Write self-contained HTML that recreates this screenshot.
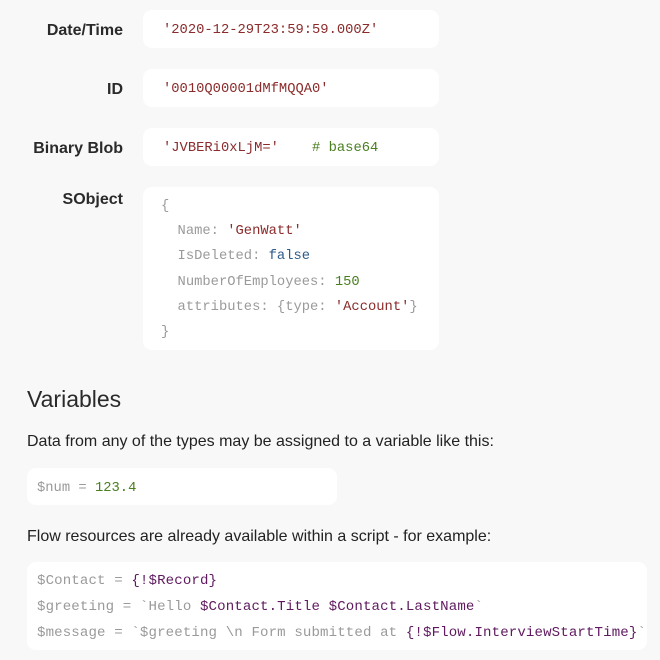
<!DOCTYPE html>
<html><head><style>
body{margin:0;width:660px;height:660px;background:#f8f8f8;font-family:"Liberation Sans",sans-serif;color:#222;position:relative;overflow:hidden}
.l{position:absolute;right:537px;font-weight:bold;font-size:16px;color:#2a2a2a;text-align:right;white-space:nowrap}
.b{position:absolute;background:#fff;border-radius:9px}
.m{font-family:"Liberation Mono",monospace;font-size:13.8px;white-space:pre;position:absolute}
.s{color:#8b2b2b}.g{color:#9a9a9a}.n{color:#4a7f1f}.k{color:#2c5a8a}.p{color:#5f1a5f}
.t{position:absolute;left:27px;font-size:16px;color:#222;white-space:nowrap}
</style></head><body>
<div class="l" style="top:22px">Date/Time</div>
<div class="b" style="left:143px;top:10px;width:296px;height:38px"></div>
<div class="m s" style="left:163px;top:23px">'2020-12-29T23:59:59.000Z'</div>
<div class="l" style="top:81px">ID</div>
<div class="b" style="left:143px;top:69px;width:296px;height:38px"></div>
<div class="m s" style="left:163px;top:82px">'0010Q00001dMfMQQA0'</div>
<div class="l" style="top:140px">Binary Blob</div>
<div class="b" style="left:143px;top:128px;width:296px;height:38px"></div>
<div class="m" style="left:163px;top:141px"><span class="s">'JVBERi0xLjM='</span>    <span class="n"># base64</span></div>
<div class="l" style="top:191px">SObject</div>
<div class="b" style="left:143px;top:187px;width:296px;height:163px"></div>
<div class="m g" style="left:161px;top:194px;line-height:25.2px">{
  Name: <span class="s">'GenWatt'</span>
  IsDeleted: <span class="k">false</span>
  NumberOfEmployees: <span class="n">150</span>
  attributes: {type: <span class="s">'Account'</span>}
}</div>
<div class="t" style="top:386px;font-size:23px;color:#2a2a2a">Variables</div>
<div class="t" style="top:433px">Data from any of the types may be assigned to a variable like this:</div>
<div class="b" style="left:27px;top:468px;width:310px;height:37px"></div>
<div class="m g" style="left:37px;top:481px">$num = <span class="n">123.4</span></div>
<div class="t" style="top:528px">Flow resources are already available within a script - for example:</div>
<div class="b" style="left:27px;top:562px;width:620px;height:88px"></div>
<div class="m g" style="left:37px;top:568px;line-height:26px;font-size:14.1px;letter-spacing:0.12px">$Contact = <span class="p">{!$Record}</span>
$greeting = `Hello <span class="p">$Contact.Title $Contact.LastName</span>`
$message = `$greeting \n Form submitted at <span class="p">{!$Flow.InterviewStartTime}</span>`</div>
</body></html>
